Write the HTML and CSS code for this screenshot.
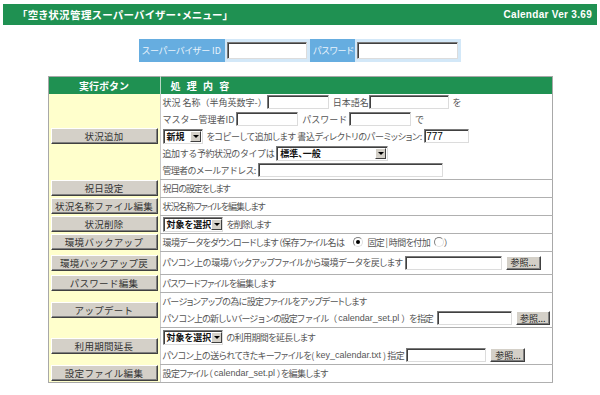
FILE: index.html
```html
<!DOCTYPE html>
<html lang="ja">
<head>
<meta charset="utf-8">
<link rel="stylesheet" href="styles.css">
</head>
<body>
<div class="titlebar">
  <span class="title">「空き状況管理スーパーバイザー・メニュー」</span>
  <span class="ver">Calendar Ver 3.69</span>
</div>

<div class="login">
  <span class="lbl lbl-id">スーパーバイザー ID</span>
  <span class="lcell lcell-id"><input type="text" class="tb w80 h17"></span>
  <span class="lbl lbl-pw">パスワード</span>
  <span class="lcell lcell-pw"><input type="password" class="tb w101 h17"></span>
</div>

<table class="menu">
  <colgroup><col class="c-left"><col class="c-right"></colgroup>
  <tr class="head">
    <th class="hl">実行ボタン</th>
    <th class="hr">処 理 内 容</th>
  </tr>
  <tr class="r-add">
    <td class="l"><span class="btn">状況追加</span></td>
    <td class="r">
      <div class="line"><span class="np">状況 名称（半角英数字-）</span><input type="text" class="tb w62"><span class="gap"></span><span class="np">日本語名</span><input type="text" class="tb w80"><span class="gap"></span>を</div>
      <div class="line"><span class="np">マスター管理者ID</span><input type="text" class="tb w62 ml2"><span class="gap"></span><span class="np">パスワード</span><input type="text" class="tb w62 ml2"><span class="gap"></span>で</div>
      <div class="line loose"><span class="sel w40"><span class="st">新規</span><span class="arr"></span></span><span class="gap"></span>をコピーして追加します 書込ディレクトリのパーミッション:<input type="text" class="tb w45 ml2" value="777"></div>
      <div class="line"><span class="np tight">追加する予約状況のタイプは</span><span class="sel w112 ml2"><span class="st">標準、一般</span><span class="arr"></span></span></div>
      <div class="line"><span class="np tighter">管理者のメールアドレス:</span><input type="text" class="tb w185 ml2"></div>
    </td>
  </tr>
  <tr>
    <td class="l"><span class="btn">祝日設定</span></td>
    <td class="r"><div class="line narrow">祝日の設定をします</div></td>
  </tr>
  <tr>
    <td class="l"><span class="btn">状況名称ファイル編集</span></td>
    <td class="r"><div class="line narrow">状況名称ファイルを編集します</div></td>
  </tr>
  <tr>
    <td class="l"><span class="btn">状況削除</span></td>
    <td class="r"><div class="line narrow"><span class="sel w60"><span class="st">対象を選択</span><span class="arr"></span></span><span class="gap"></span>を削除します</div></td>
  </tr>
  <tr>
    <td class="l"><span class="btn">環境バックアップ</span></td>
    <td class="r"><div class="line">環境データをダウンロードします（保存ファイル名は<span class="gap2"></span><span class="radio on"></span><span class="gap"></span>固定 | 時間を付加<span class="gap"></span><span class="radio"></span>）</div></td>
  </tr>
  <tr class="r-file">
    <td class="l"><span class="btn">環境バックアップ戻</span></td>
    <td class="r"><div class="line tall22 loose">パソコン上の環境バックアップファイルから環境データを戻します<input type="text" class="tb w97 ml2"><span class="fbtn">参照...</span></div></td>
  </tr>
  <tr>
    <td class="l"><span class="btn">パスワード編集</span></td>
    <td class="r"><div class="line">パスワードファイルを編集します</div></td>
  </tr>
  <tr>
    <td class="l"><span class="btn">アップデート</span></td>
    <td class="r">
      <div class="line">バージョンアップの為に設定ファイルをアップデートします</div>
      <div class="line"><span class="np mono">パソコン上の新しいバージョンの設定ファイル（</span><span class="lat">calendar_set.pl</span><span class="np mono">）を指定</span><input type="text" class="tb w75 ml4"><span class="fbtn">参照...</span></div>
    </td>
  </tr>
  <tr>
    <td class="l"><span class="btn">利用期間延長</span></td>
    <td class="r">
      <div class="line tall"><span class="sel w60"><span class="st">対象を選択</span><span class="arr"></span></span><span class="gap"></span>の利用期間を延長します</div>
      <div class="line mid">パソコン上の送られてきたキーファイルを(<span class="lat">key_calendar.txt</span>) 指定<input type="text" class="tb w80 ml2"><span class="fbtn">参照...</span></div>
    </td>
  </tr>
  <tr>
    <td class="l"><span class="btn">設定ファイル編集</span></td>
    <td class="r"><div class="line">設定ファイル（<span class="lat">calendar_set.pl</span>）を編集します</div></td>
  </tr>
</table>
</body>
</html>
```

FILE: styles.css
```css
* { box-sizing: border-box; }

body {
  margin: 0;
  width: 600px;
  height: 395px;
  background: #ffffff;
  font-family: "Noto Sans CJK JP", sans-serif;
  font-size: 10px;
  color: #555555;
  overflow: hidden;
}

/* title bar */
.titlebar {
  margin: 4px 3px 0;
  height: 21px;
  background: #1f9152;
  display: flex;
  justify-content: space-between;
  align-items: center;
  padding: 0 5px 0 19px;
  color: #ffffff;
}
.title {
  font-size: 10.5px;
  font-weight: bold;
  font-feature-settings: "palt";
  letter-spacing: 0.45px;
}
.ver {
  font-family: "Liberation Sans", Arial, sans-serif;
  font-weight: bold;
  font-size: 10px;
  letter-spacing: 0.3px;
}

/* login */
.login {
  display: flex;
  width: 322px;
  height: 23px;
  margin: 14px auto 0;
  background: #d3e8f8;
}
.lbl {
  background: #66ade0;
  color: #eaf4fc;
  display: flex;
  align-items: center;
  padding-left: 3px;
  font-size: 9px;
  white-space: nowrap;
  font-feature-settings: "palt";
}
.lbl-id { width: 86px; }
.lbl-pw { width: 45px; }
.lcell { display: flex; align-items: center; padding-left: 2px; }
.lcell-id { width: 85px; }
.lcell-pw { width: 106px; }

/* inputs */
.tb {
  display: inline-block;
  height: 14px;
  margin: 0;
  padding: 0 1px;
  border: 1px solid;
  border-color: #7a7a7a #dcdcdc #dcdcdc #7a7a7a;
  box-shadow: inset 1px 1px 0 #404040;
  background: #ffffff;
  font-family: "Liberation Sans", Arial, sans-serif;
  font-size: 10px;
  letter-spacing: 0;
  color: #000000;
  vertical-align: middle;
  outline: none;
}
.h17 { height: 17px; }
.w45 { width: 45px; }
.w62 { width: 62px; }
.w75 { width: 75px; }
.w80 { width: 80px; }
.w97 { width: 97px; }
.w101 { width: 101px; }
.w185 { width: 185px; }
.ml2 { margin-left: 2px; }
.ml4 { margin-left: 4px; }

/* table */
.menu {
  margin: 14px auto 0;
  width: 505px;
  border-collapse: collapse;
  table-layout: fixed;
  border: 1px solid #a8a8a8;
}
.c-left { width: 112px; }
.head th {
  background: #1f9152;
  color: #ffffff;
  font-weight: bold;
  font-size: 10px;
  height: 17px;
  padding: 0;
}
.hl { text-align: center; }
.hr {
  text-align: left;
  padding-left: 10px !important;
  border-left: 1px solid #b9d8c4;
  word-spacing: 4px;
}
td { padding: 0; }
td.l {
  background: #ffffcc;
  text-align: center;
  vertical-align: middle;
  padding: 0 1px 0 2px;
}
td.r {
  background: #ffffff;
  border-left: 1px solid #c8c8c8;
  border-bottom: 1px solid #b0b0b0;
  padding: 0 2px;
  vertical-align: middle;
  font-size: 9px;
  font-feature-settings: "palt";
  letter-spacing: -0.6px;
}
.np {
  font-feature-settings: normal;
  letter-spacing: 0;
}
.np.tight { letter-spacing: -0.4px; }
.np.tighter { letter-spacing: -0.7px; }
.np.mono { letter-spacing: -1.1px; }
.line {
  height: 17px;
  display: flex;
  align-items: center;
  white-space: nowrap;
}
.line.loose { letter-spacing: -0.25px; }
.line.mid { letter-spacing: -0.4px; }
.line.narrow { letter-spacing: -1.1px; }
.line.tall { height: 19px; }
.line.tall22 { height: 22px; }
.gap { display: inline-block; width: 4px; }
.gap2 { display: inline-block; width: 9px; }
.lat {
  font-family: "Liberation Sans", Arial, sans-serif;
  font-size: 9px;
  letter-spacing: 0;
  margin: 0 2px;
}

/* buttons */
.btn {
  display: flex;
  align-items: center;
  justify-content: center;
  width: 107px;
  height: 16px;
  background: #d4d0c8;
  border: 1px solid;
  border-color: #ffffff #404040 #404040 #ffffff;
  box-shadow: inset -1px -1px 0 #808080;
  color: #333333;
  font-size: 9.5px;
  letter-spacing: 0.3px;
}
.fbtn {
  display: inline-flex;
  align-items: center;
  justify-content: center;
  width: 35px;
  height: 14px;
  margin-left: 4px;
  background: #d4d0c8;
  border: 1px solid;
  border-color: #ffffff #404040 #404040 #ffffff;
  box-shadow: inset -1px -1px 0 #808080;
  color: #222222;
  font-size: 9px;
  letter-spacing: 0;
}

/* selects */
.sel {
  display: inline-flex;
  align-items: center;
  justify-content: space-between;
  height: 15px;
  border: 1px solid;
  border-color: #7a7a7a #dcdcdc #dcdcdc #7a7a7a;
  box-shadow: inset 1px 1px 0 #404040;
  background: #ffffff;
  padding: 1px 1px 1px 3px;
  overflow: hidden;
}
.w40 { width: 40px; }
.w60 { width: 60px; }
.w112 { width: 112px; }
.st {
  color: #111111;
  font-weight: bold;
  font-size: 9px;
  letter-spacing: 0;
  font-feature-settings: "palt";
}
.arr {
  position: relative;
  flex: none;
  width: 11px;
  height: 11px;
  background: #d4d0c8;
  border: 1px solid;
  border-color: #ffffff #404040 #404040 #ffffff;
}
.arr::after {
  content: "";
  position: absolute;
  left: 2px;
  top: 3px;
  border-left: 3px solid transparent;
  border-right: 3px solid transparent;
  border-top: 3px solid #000000;
}

/* radios */
.radio {
  display: inline-block;
  position: relative;
  width: 10px;
  height: 10px;
  border-radius: 50%;
  border: 1px solid;
  border-color: #808080 #e0e0e0 #e0e0e0 #808080;
  background: #ffffff;
}
.radio.on::after {
  content: "";
  position: absolute;
  left: 2px;
  top: 2px;
  width: 4px;
  height: 4px;
  border-radius: 50%;
  background: #000000;
}
```
